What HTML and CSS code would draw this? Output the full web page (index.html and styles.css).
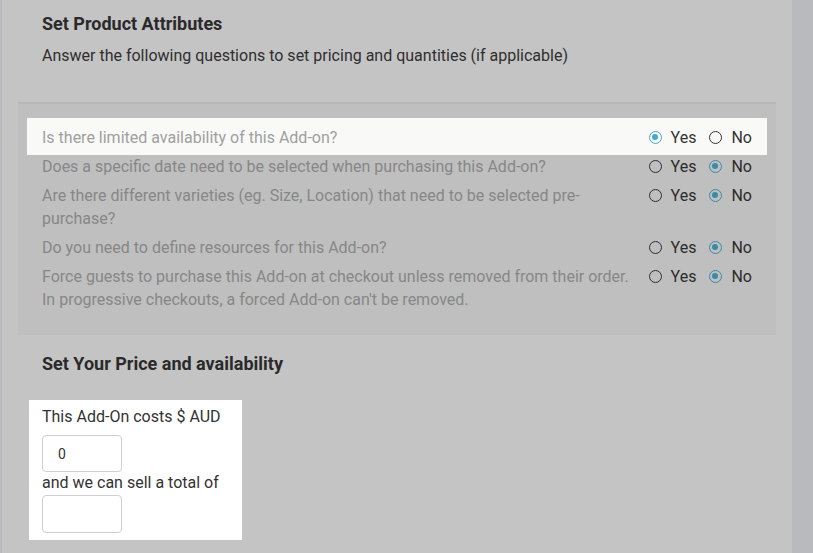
FILE: index.html
```html
<!DOCTYPE html>
<html>
<head>
<meta charset="utf-8">
<link rel="stylesheet" href="styles.css">
</head>
<body>
<div class="page">
  <div class="edge-left"></div>
  <div class="main">
    <div class="intro">
      <h2 class="heading">Set Product Attributes</h2>
      <p class="lead">Answer the following questions to set pricing and quantities (if applicable)</p>
    </div>
    <div class="panel">
      <div class="row row-highlight">
        <div class="question">Is there limited availability of this Add-on?</div>
        <div class="choices">
          <span class="radio checked"></span><span class="label">Yes</span>
          <span class="radio"></span><span class="label">No</span>
        </div>
      </div>
      <div class="row">
        <div class="question">Does a specific date need to be selected when purchasing this Add-on?</div>
        <div class="choices">
          <span class="radio"></span><span class="label">Yes</span>
          <span class="radio checked"></span><span class="label">No</span>
        </div>
      </div>
      <div class="row">
        <div class="question">Are there different varieties (eg. Size, Location) that need to be selected pre-purchase?</div>
        <div class="choices">
          <span class="radio"></span><span class="label">Yes</span>
          <span class="radio checked"></span><span class="label">No</span>
        </div>
      </div>
      <div class="row">
        <div class="question">Do you need to define resources for this Add-on?</div>
        <div class="choices">
          <span class="radio"></span><span class="label">Yes</span>
          <span class="radio checked"></span><span class="label">No</span>
        </div>
      </div>
      <div class="row">
        <div class="question">Force guests to purchase this Add-on at checkout unless removed from their order. In progressive checkouts, a forced Add-on can't be removed.</div>
        <div class="choices">
          <span class="radio"></span><span class="label">Yes</span>
          <span class="radio checked"></span><span class="label">No</span>
        </div>
      </div>
    </div>
    <h2 class="heading price-heading">Set Your Price and availability</h2>
    <div class="price-box">
      <div class="field-label">This Add-On costs $ AUD</div>
      <input class="field-input first" type="text" value="0">
      <div class="field-label">and we can sell a total of</div>
      <input class="field-input second" type="text" value="">
    </div>
  </div>
  <div class="edge-right"></div>
</div>
</body>
</html>
```
FILE: styles.css
```css
html, body {
  margin: 0;
  padding: 0;
  height: 100%;
  overflow: hidden;
}
body {
  background: #c4c4c4;
  font-family: Roboto, "Liberation Sans", Arial, sans-serif;
  color: #2e2e2e;
}
.page {
  display: flex;
  height: 553px;
}
.edge-left {
  width: 2px;
  background: #babbbe;
}
.edge-right {
  width: 21px;
  background: #b9babe;
}
.main {
  flex: 1;
  padding: 0 16px;
  background: #c4c4c4;
}
.intro {
  padding: 13px 24px 0;
  margin-bottom: 35px;
}
.heading {
  margin: 0;
  font-size: 18px;
  font-weight: 700;
  line-height: 22px;
  color: #2a2a2a;
}
.lead {
  margin: 10px 0 0;
  font-size: 16px;
  line-height: 22px;
  color: #2f2f2f;
}
.panel {
  border-top: 2px solid #b7b7b7;
  background: #bfbfbf;
  padding: 14px 9px 24px;
}
.row {
  display: flex;
  align-items: flex-start;
  gap: 16px;
  padding: 0 15px;
  margin-bottom: 6px;
  font-size: 16px;
  line-height: 23px;
}
.row:last-child {
  margin-bottom: 0;
}
.row-highlight {
  background: #f9f9f7;
  padding-top: 8px;
  padding-bottom: 6px;
  margin-bottom: 0;
}
.question {
  flex: 1;
  color: #878787;
}
.row-highlight .question {
  color: #a0a0a0;
}
.choices {
  display: flex;
  align-items: center;
  height: 23px;
  flex: none;
}
.radio {
  box-sizing: border-box;
  width: 13px;
  height: 13px;
  border: 1.5px solid #2d2d2d;
  border-radius: 50%;
  position: relative;
  flex: none;
}
.radio.checked {
  border-color: #3a8ca6;
}
.radio.checked::after {
  content: "";
  position: absolute;
  left: 2px;
  top: 2px;
  width: 6px;
  height: 6px;
  border-radius: 50%;
  background: #3a8ca6;
}
.row-highlight .radio {
  border-color: #333;
}
.row-highlight .radio.checked {
  border-color: #46a8d0;
}
.row-highlight .radio.checked::after {
  background: #46a8d0;
}
.label {
  margin-left: 9px;
  margin-right: 13px;
  color: #2b2b2b;
}
.label:last-child {
  margin-right: 0;
}
.row-highlight .label {
  color: #333;
}
.price-heading {
  margin: 18px 24px 25px;
}
.price-box {
  margin-left: 11px;
  width: 213px;
  box-sizing: border-box;
  background: #ffffff;
  padding: 6px 13px 7px;
}
.field-label {
  font-size: 16px;
  line-height: 22px;
  color: #333;
}
.field-input {
  display: block;
  box-sizing: border-box;
  width: 80px;
  height: 37px;
  border: 1px solid #cfcfcf;
  border-radius: 4px;
  padding: 0 0 0 15px;
  font-family: Roboto, "Liberation Sans", Arial, sans-serif;
  font-size: 14px;
  color: #333;
  background: #fff;
  outline: none;
}
.field-input.first {
  margin: 7px 0 0;
}
.field-input.second {
  margin: 1px 0 0;
  height: 38px;
}
```
